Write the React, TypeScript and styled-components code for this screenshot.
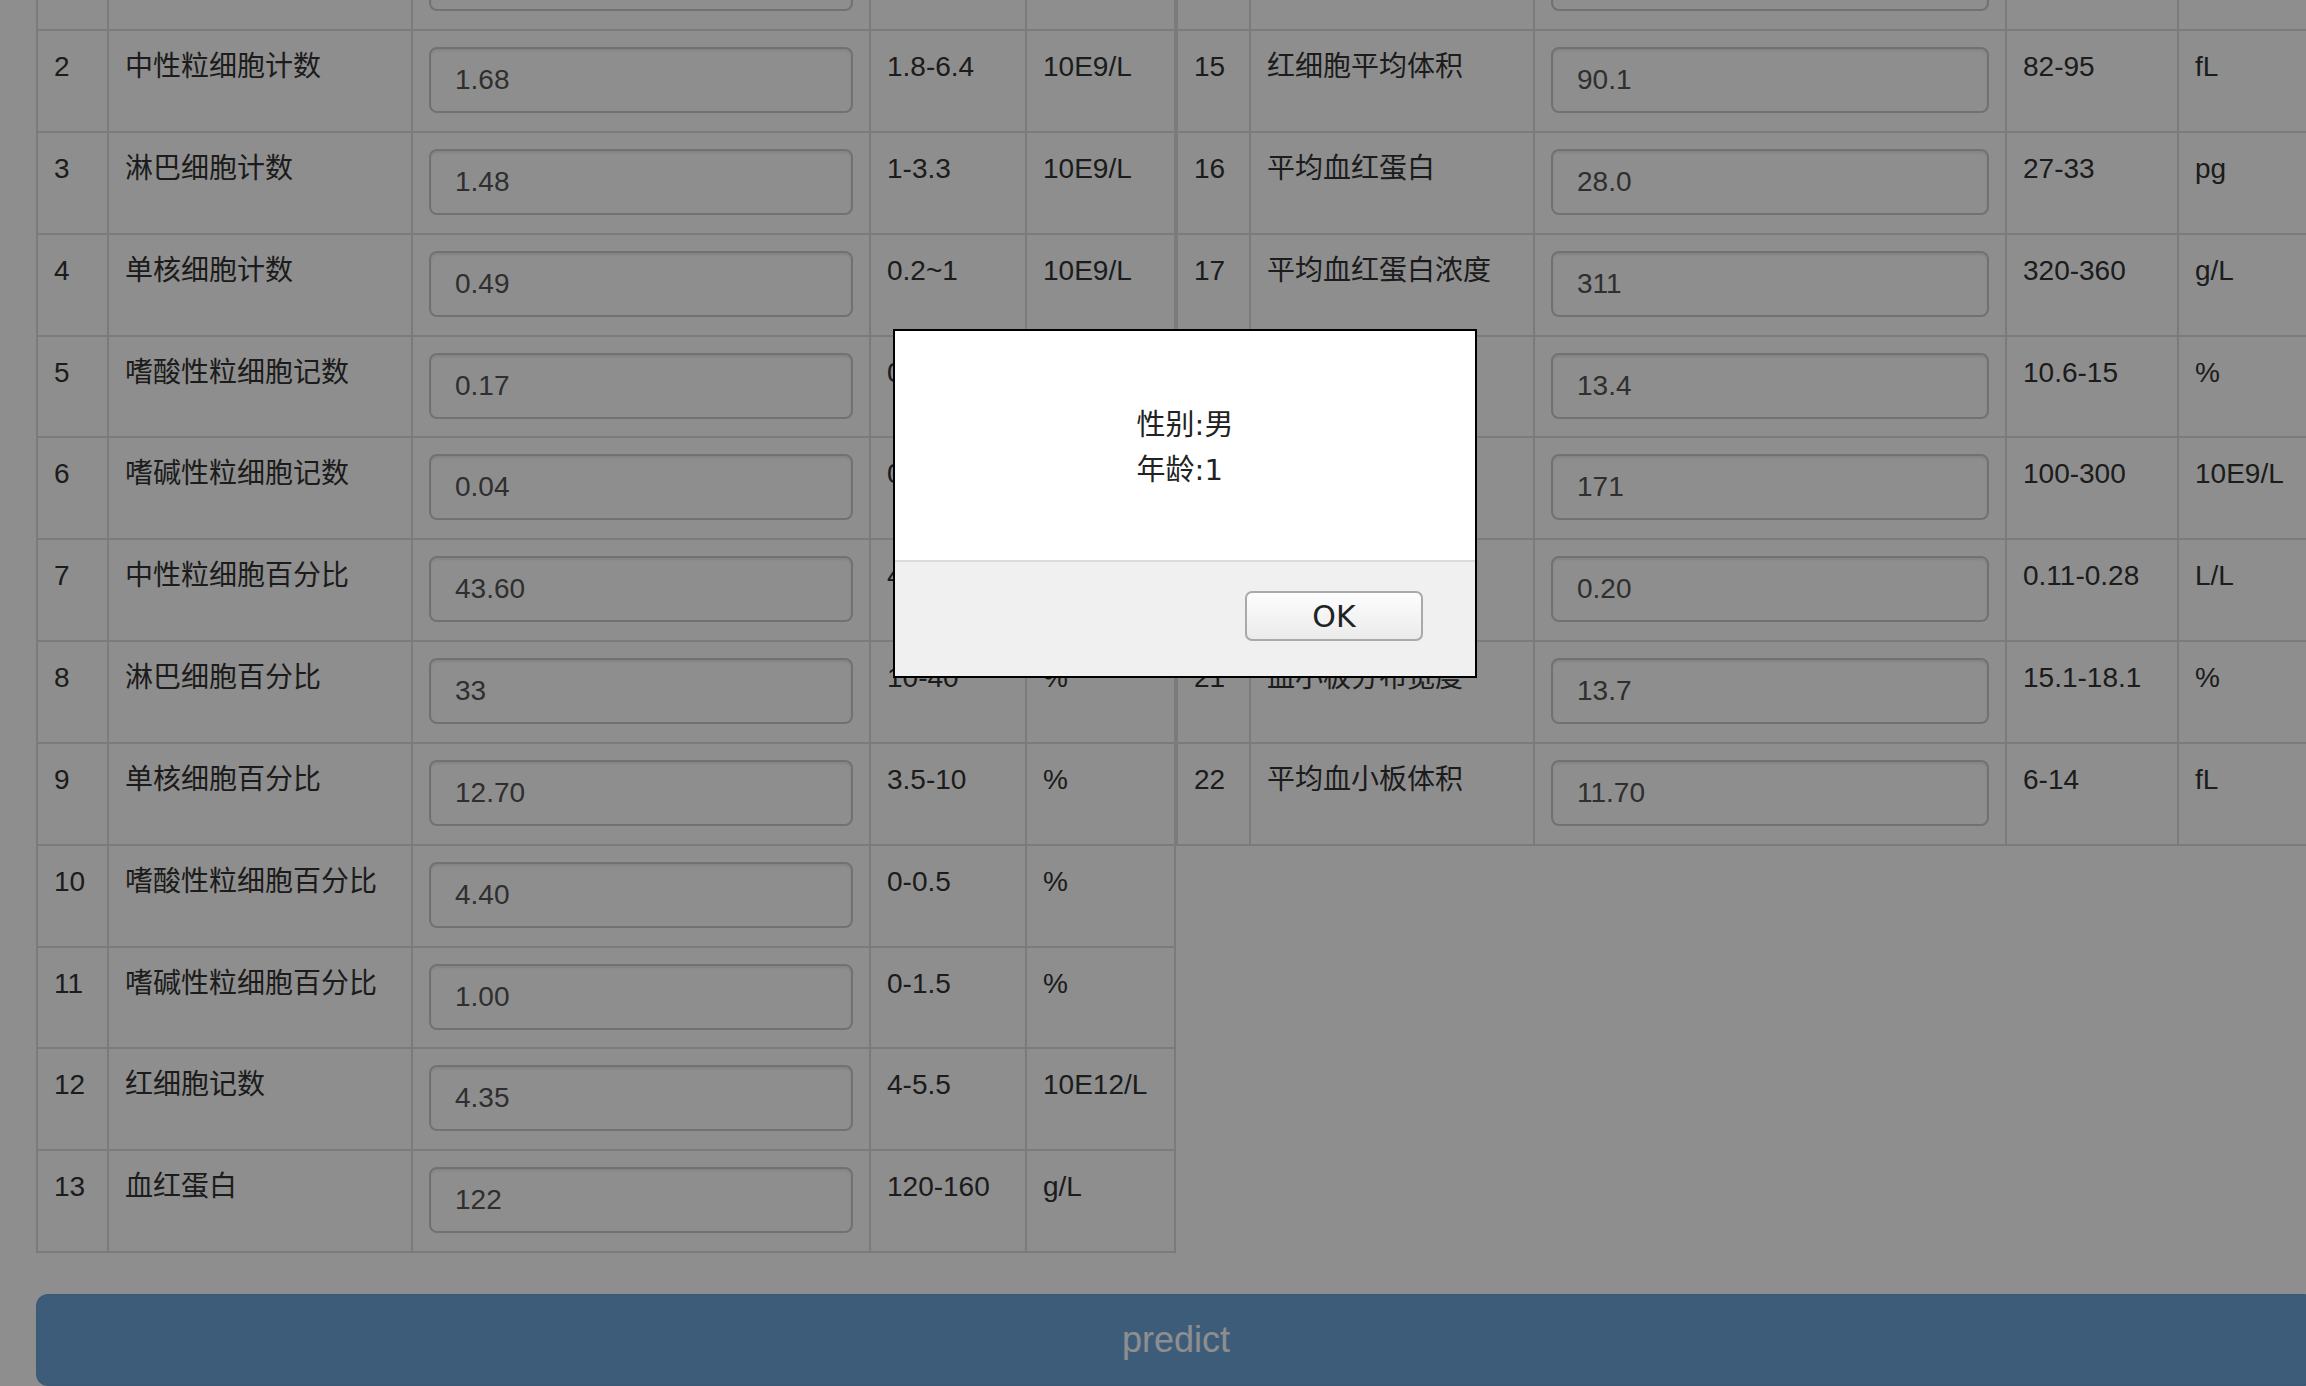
import React from "react";
import styled, { createGlobalStyle } from "styled-components";

const GlobalStyle = createGlobalStyle`
  html, body {
    margin: 0;
    padding: 0;
    overflow: hidden;
    background: #fff;
  }

  body {
    font-family: "Liberation Sans", "Noto Sans CJK SC", sans-serif;
    font-size: 28px;
    line-height: 40px;
    color: #333;
  }
`;

const Page = styled.div`
  width: 2280px;
  margin-top: -72.85px;
  margin-left: 36px;
`;

const Tables = styled.div`
  display: flex;
  align-items: flex-start;
`;

const LabTable = styled.table`
  width: 1140px;
  table-layout: fixed;
  border-collapse: separate;
  border-spacing: 0;
  margin-bottom: 41px;

  & tr:last-child td {
    border-bottom: 2px solid #ddd;
  }
`;

const Col = styled.col<{ $w: number }>`
  width: ${({ $w }) => $w}px;
`;

const Cell = styled.td`
  box-sizing: border-box;
  border-left: 2px solid #ddd;
  border-top: 2px solid #ddd;
  padding: 16px 16px 17.85px;
  vertical-align: top;
  white-space: nowrap;

  &:last-child {
    border-right: 2px solid #ddd;
  }
`;

const ValueInput = styled.input`
  display: block;
  width: 100%;
  height: 66px;
  box-sizing: border-box;
  margin: 0;
  padding: 0 24px;
  border: 2px solid #ccc;
  border-radius: 8px;
  box-shadow: inset 0 2px 2px rgba(0, 0, 0, 0.075);
  background: #fff;
  font-family: "Liberation Sans", sans-serif;
  font-size: 28px;
  color: #555;
  outline: none;
`;

const PredictButton = styled.button`
  display: block;
  width: 100%;
  height: 92px;
  box-sizing: border-box;
  border: 2px solid #6aa2d8;
  border-radius: 12px;
  background: #6ea6dc;
  color: #fff;
  font-family: "Liberation Sans", sans-serif;
  font-size: 36px;
  line-height: 48px;
`;

const Overlay = styled.div`
  position: fixed;
  inset: 0;
  background: rgba(0, 0, 0, 0.443);
`;

const Dialog = styled.div`
  position: fixed;
  left: 893px;
  top: 329px;
  width: 584px;
  height: 349px;
  box-sizing: border-box;
  border: 2px solid #000;
  background: #fff;
  display: flex;
  flex-direction: column;
  font-family: "DejaVu Sans", "Noto Sans CJK SC", sans-serif;
  color: #222;
`;

const DialogBody = styled.div`
  height: 229px;
  display: flex;
  align-items: center;
  justify-content: center;
  padding-top: 4px;
  box-sizing: border-box;
`;

const Message = styled.div`
  font-size: 29px;
  line-height: 45px;
  text-align: left;
`;

const DialogFooter = styled.div`
  flex: 1;
  background: #f0f0f0;
  border-top: 2px solid #dcdcdc;
  display: flex;
  justify-content: flex-end;
  align-items: flex-start;
  padding: 29px 52px 0 0;
`;

const OkButton = styled.button`
  width: 178px;
  height: 50px;
  box-sizing: border-box;
  border: 2px solid #a9a9a9;
  border-radius: 7px;
  background: linear-gradient(#fdfdfd, #ebebeb);
  font-family: "DejaVu Sans", sans-serif;
  font-size: 30px;
  color: #222;
  padding: 0;
`;

interface LabRow {
  no: number;
  name: string;
  value: string;
  range: string;
  unit: string;
}

const leftRows: LabRow[] = [
  { no: 1, name: "白细胞计数", value: "3.86", range: "4-10", unit: "10E9/L" },
  { no: 2, name: "中性粒细胞计数", value: "1.68", range: "1.8-6.4", unit: "10E9/L" },
  { no: 3, name: "淋巴细胞计数", value: "1.48", range: "1-3.3", unit: "10E9/L" },
  { no: 4, name: "单核细胞计数", value: "0.49", range: "0.2~1", unit: "10E9/L" },
  { no: 5, name: "嗜酸性粒细胞记数", value: "0.17", range: "0.05-0.5", unit: "10E9/L" },
  { no: 6, name: "嗜碱性粒细胞记数", value: "0.04", range: "0-1", unit: "10E9/L" },
  { no: 7, name: "中性粒细胞百分比", value: "43.60", range: "40-75", unit: "%" },
  { no: 8, name: "淋巴细胞百分比", value: "33", range: "10-40", unit: "%" },
  { no: 9, name: "单核细胞百分比", value: "12.70", range: "3.5-10", unit: "%" },
  { no: 10, name: "嗜酸性粒细胞百分比", value: "4.40", range: "0-0.5", unit: "%" },
  { no: 11, name: "嗜碱性粒细胞百分比", value: "1.00", range: "0-1.5", unit: "%" },
  { no: 12, name: "红细胞记数", value: "4.35", range: "4-5.5", unit: "10E12/L" },
  { no: 13, name: "血红蛋白", value: "122", range: "120-160", unit: "g/L" },
];

const rightRows: LabRow[] = [
  { no: 14, name: "红细胞压积", value: "0.39", range: "0.37-0.5", unit: "L/L" },
  { no: 15, name: "红细胞平均体积", value: "90.1", range: "82-95", unit: "fL" },
  { no: 16, name: "平均血红蛋白", value: "28.0", range: "27-33", unit: "pg" },
  { no: 17, name: "平均血红蛋白浓度", value: "311", range: "320-360", unit: "g/L" },
  { no: 18, name: "红细胞分布宽度", value: "13.4", range: "10.6-15", unit: "%" },
  { no: 19, name: "血小板计数", value: "171", range: "100-300", unit: "10E9/L" },
  { no: 20, name: "血小板压积", value: "0.20", range: "0.11-0.28", unit: "L/L" },
  { no: 21, name: "血小板分布宽度", value: "13.7", range: "15.1-18.1", unit: "%" },
  { no: 22, name: "平均血小板体积", value: "11.70", range: "6-14", unit: "fL" },
];

const ResultTable: React.FC<{ rows: LabRow[]; widths: number[] }> = ({
  rows,
  widths,
}) => (
  <LabTable>
    <colgroup>
      {widths.map((w, i) => (
        <Col key={i} $w={w} />
      ))}
    </colgroup>
    <tbody>
      {rows.map((r) => (
        <tr key={r.no}>
          <Cell>{r.no}</Cell>
          <Cell>{r.name}</Cell>
          <Cell>
            <ValueInput type="text" defaultValue={r.value} />
          </Cell>
          <Cell>{r.range}</Cell>
          <Cell>{r.unit}</Cell>
        </tr>
      ))}
    </tbody>
  </LabTable>
);

const App: React.FC = () => {
  return (
    <>
      <GlobalStyle />
      <Page>
        <Tables>
          <ResultTable rows={leftRows} widths={[71, 304, 458, 156, 151]} />
          <ResultTable rows={rightRows} widths={[73, 284, 472, 172, 139]} />
        </Tables>
        <PredictButton type="button">predict</PredictButton>
      </Page>

      <Overlay />
      <Dialog role="alertdialog">
        <DialogBody>
          <Message>
            性别:男
            <br />
            年龄:1
          </Message>
        </DialogBody>
        <DialogFooter>
          <OkButton type="button">OK</OkButton>
        </DialogFooter>
      </Dialog>
    </>
  );
};

export default App;
